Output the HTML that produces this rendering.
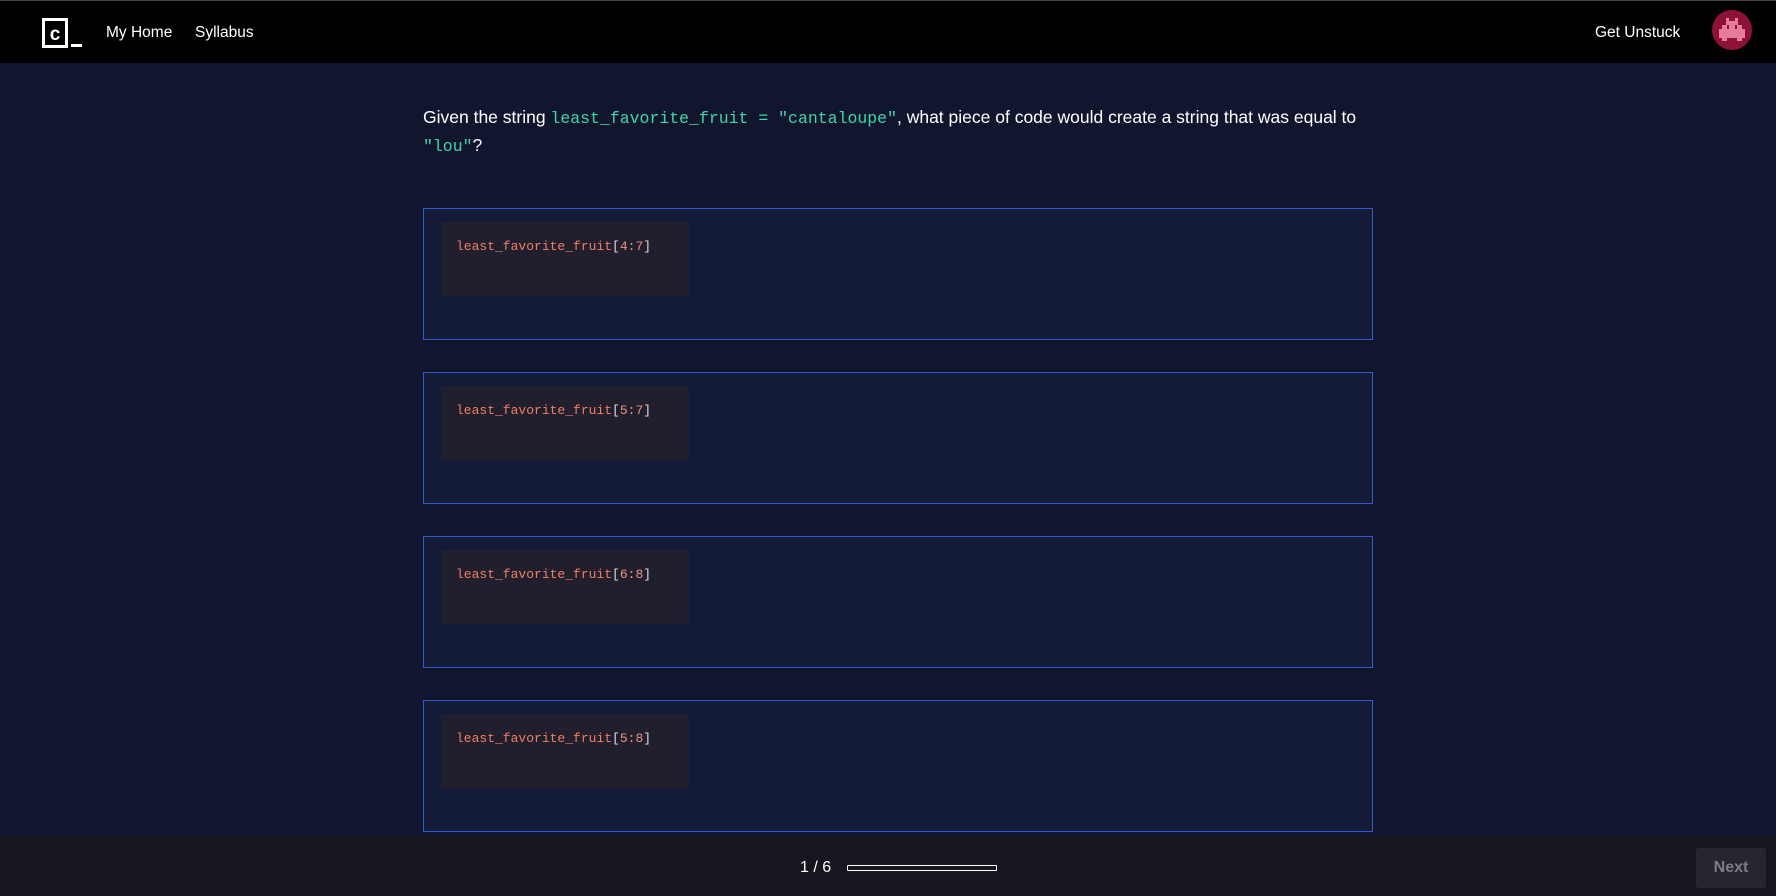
<!DOCTYPE html>
<html><head><meta charset="utf-8"><style>
*{margin:0;padding:0;box-sizing:border-box}
body{width:1776px;height:896px;background:#11162e;font-family:"Liberation Sans",sans-serif;overflow:hidden;position:relative;color:#fff}
.nav{position:absolute;left:0;top:0;width:1776px;height:63px;background:#000;border-top:1px solid #444}
.logo{position:absolute;left:42px;top:17px;width:26px;height:30px;border:3px solid #fff;color:#fff;font:bold 19px "Liberation Sans",sans-serif;text-align:center;line-height:28px}
.us{position:absolute;left:71px;top:43px;width:11px;height:3px;background:#fff}
.nl{position:absolute;top:23px;font-size:15.5px;color:#fff}
.av{position:absolute;left:1712px;top:9px;width:40px;height:40px;border-radius:50%;background:#8e1238}
.q{position:absolute;left:423px;top:103px;width:980px;font-size:17.5px;line-height:28px;color:#fff}
.q code{font-family:"Liberation Mono",monospace;color:#3dd6a8;font-size:16.5px;line-height:1}
.box{position:absolute;left:423px;width:950px;height:132px;background:#141b38;border:1px solid #2d5bd0}
.cb{position:absolute;left:17px;top:13px;width:248px;height:74px;background:#211f2e;font:13px/1 "Liberation Mono",monospace;color:#f07e64;padding:18px 0 0 15px}
.cb b{font-weight:normal;color:#ddd}
.cb i{font-style:normal;color:#f0917a}
.foot{position:absolute;left:0;top:837px;width:1776px;height:59px;background:#17161e}
.pg{position:absolute;left:800px;top:22px;font-size:16px;color:#fff}
.bar{position:absolute;left:847px;top:28px;width:150px;height:6px;border:1px solid #fff;border-radius:1px}
.next{position:absolute;left:1696px;top:11px;width:70px;height:40px;background:#27262e;border-radius:3px;color:#7d7c84;font-weight:bold;font-size:16px;text-align:center;line-height:40px}
</style></head><body>
<div class="nav">
<div class="logo">c</div><div class="us"></div>
<div class="nl" style="left:106px">My Home</div>
<div class="nl" style="left:195px">Syllabus</div>
<div class="nl" style="left:1595px">Get Unstuck</div>
<div class="av"><svg width="40" height="40" viewBox="0 0 40 40"><g fill="#e77b9c"><rect x="14" y="8" width="3" height="3"/><rect x="23" y="8" width="3" height="3"/><rect x="14" y="11" width="12" height="4"/><rect x="10" y="15" width="5" height="4"/><rect x="17" y="15" width="6" height="4"/><rect x="25" y="15" width="5" height="4"/><rect x="7" y="19" width="26" height="9"/><rect x="10" y="28" width="5" height="3"/><rect x="25" y="28" width="5" height="3"/></g></svg></div>
</div>
<div class="q">Given the string <code>least_favorite_fruit = "cantaloupe"</code>, what piece of code would create a string that was equal to <code>"lou"</code>?</div>
<div class="box" style="top:208px"><div class="cb">least_favorite_fruit<b>[</b><i>4:7</i><b>]</b></div></div>
<div class="box" style="top:372px"><div class="cb">least_favorite_fruit<b>[</b><i>5:7</i><b>]</b></div></div>
<div class="box" style="top:536px"><div class="cb">least_favorite_fruit<b>[</b><i>6:8</i><b>]</b></div></div>
<div class="box" style="top:700px"><div class="cb">least_favorite_fruit<b>[</b><i>5:8</i><b>]</b></div></div>
<div class="foot"><div class="pg">1 / 6</div><div class="bar"></div><div class="next">Next</div></div>
</body></html>
